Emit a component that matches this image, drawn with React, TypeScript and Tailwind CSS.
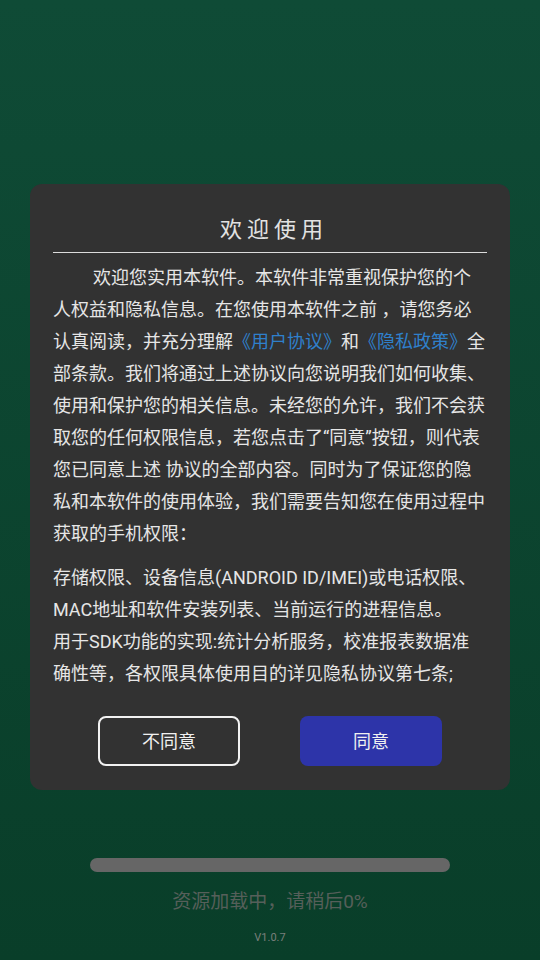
export default function App() {
  const font = { fontFamily: 'Roboto, "Noto Sans CJK SC", sans-serif' };

  return (
    <div
      className="w-[540px] h-[960px] bg-gradient-to-b from-[#0f4b36] to-[#093e29] flex flex-col items-center pt-[184px]"
      style={font}
    >
      {/* Privacy dialog */}
      <div className="w-[480px] rounded-[12px] bg-[#323232] px-[23px] pt-[31px] pb-[24px]">
        <h2 className="text-center text-[22px] leading-[30px] tracking-[5px] text-[#e2e2e2] pl-[8px]">
          欢迎使用
        </h2>
        <div className="mt-[7px] h-px bg-[#dcdcdc]" />

        <div className="mt-[9px] text-[18px] leading-[32px] text-[#e6e6e6]">
          <p className="indent-[40px]">
            欢迎您实用本软件。本软件非常重视保护您的个人权益和隐私信息。在您使用本软件之前 ，请您务必认真阅读，并充分理解
            <span className="text-[#2f80cc]">《用户协议》</span>和
            <span className="text-[#2f80cc]">《隐私政策》</span>
            全部条款。我们将通过上述协议向您说明我们如何收集、使用和保护您的相关信息。未经您的允许，我们不会获取您的任何权限信息，若您点击了“同意”按钮，则代表您已同意上述 协议的全部内容。同时为了保证您的隐私和本软件的使用体验，我们需要告知您在使用过程中获取的手机权限：
          </p>
          <p className="mt-[12px]">
            存储权限、设备信息(ANDROID ID/IMEI)或电话权限、MAC地址和软件安装列表、当前运行的进程信息。
            <br />
            用于SDK功能的实现:统计分析服务，校准报表数据准确性等，各权限具体使用目的详见隐私协议第七条;
          </p>
        </div>

        <div className="mt-[26px] flex justify-center gap-[60px]">
          <button className="w-[142px] h-[50px] rounded-[8px] border-2 border-[#f2f2f2] text-[18px] text-[#f0f0f0]">
            不同意
          </button>
          <button className="w-[142px] h-[50px] rounded-[8px] bg-[#2d34a9] text-[18px] text-[#f0f0f0]">
            同意
          </button>
        </div>
      </div>

      {/* Loading */}
      <div className="mt-[68px] w-[360px] h-[14px] rounded-full bg-[#666666]" />
      <p className="mt-[17px] text-[19px] leading-[26px] text-[#565f5a]">资源加载中，请稍后0%</p>
      <p className="mt-[16px] text-[11px] leading-[14px] text-[#7a7f7c]">V1.0.7</p>
    </div>
  );
}
